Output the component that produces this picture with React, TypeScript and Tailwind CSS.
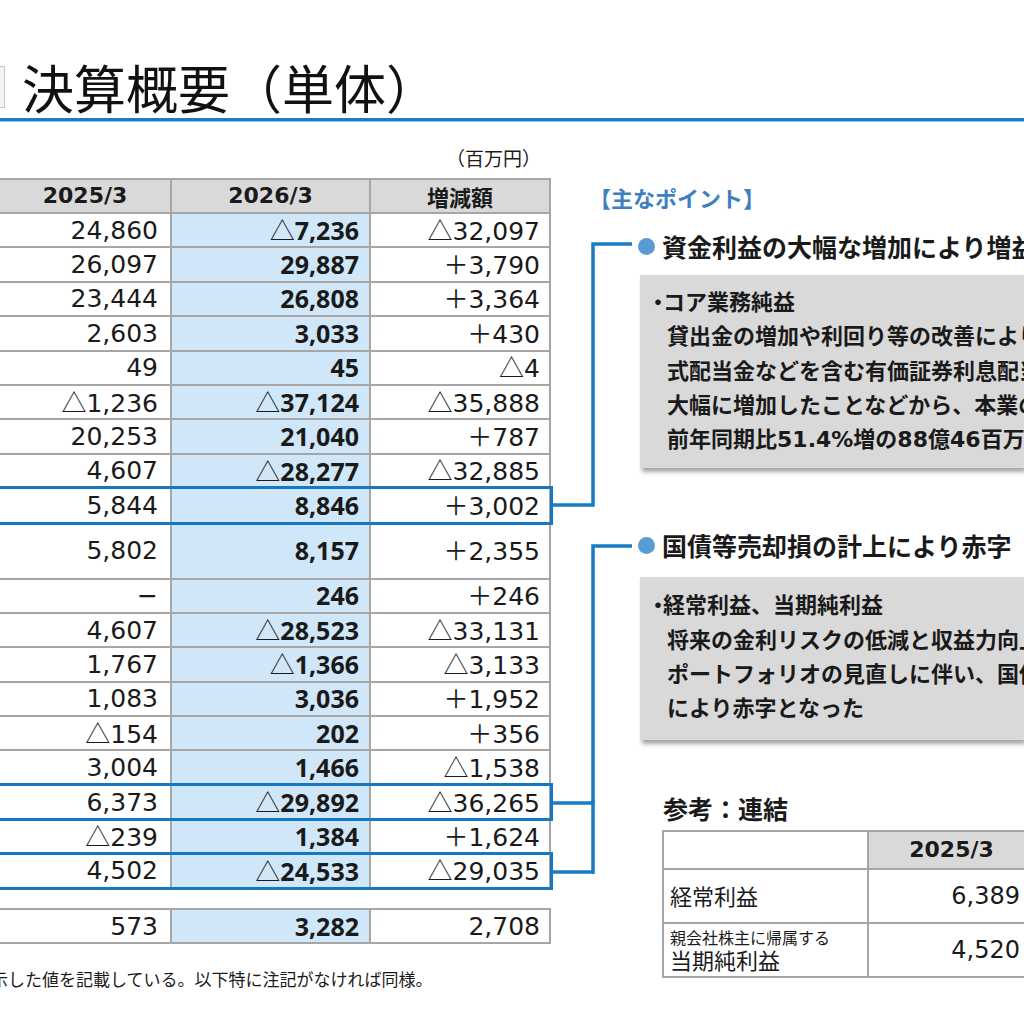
import clsx from "clsx";

type RowData = [string, string, string];

const rowsA: RowData[] = [
  ["24,860", "△7,236", "△32,097"],
  ["26,097", "29,887", "＋3,790"],
  ["23,444", "26,808", "＋3,364"],
  ["2,603", "3,033", "＋430"],
  ["49", "45", "△4"],
  ["△1,236", "△37,124", "△35,888"],
  ["20,253", "21,040", "＋787"],
  ["4,607", "△28,277", "△32,885"],
];

const rowsB: RowData[] = [
  ["−", "246", "＋246"],
  ["4,607", "△28,523", "△33,131"],
  ["1,767", "△1,366", "△3,133"],
  ["1,083", "3,036", "＋1,952"],
  ["△154", "202", "＋356"],
  ["3,004", "1,466", "△1,538"],
];

function Num({ v, bold }: { v: string; bold?: boolean }) {
  const p = v[0] === "△" || v[0] === "＋" ? v[0] : "";
  const rest = p ? v.slice(1) : v;
  return (
    <span
      className={clsx(
        "text-[25px] leading-none",
        bold ? "font-['Noto_Sans',sans-serif] font-bold" : "font-['DejaVu_Sans',sans-serif]"
      )}
    >
      {p && <span className="font-['Noto_Sans_CJK_JP',sans-serif] font-normal">{p}</span>}
      {rest}
    </span>
  );
}

function Row({ d, tall, hl }: { d: RowData; tall?: boolean; hl?: boolean }) {
  return (
    <div className={clsx("relative flex gap-[2px]", tall ? "h-[54px]" : "h-[32.4px]")}>
      <div className="w-[170px] bg-white flex items-center justify-end pr-[12px]">
        <Num v={d[0]} />
      </div>
      <div className="w-[197px] bg-[#cfe7f8] flex items-center justify-end pr-[10px]">
        <Num v={d[1]} bold />
      </div>
      <div className="flex-1 bg-white flex items-center justify-end pr-[9px]">
        <Num v={d[2]} />
      </div>
      {hl && (
        <span className="absolute -top-[3px] -bottom-[3px] -left-[6px] -right-[4px] border-[3px] border-[#1778c2] z-10" />
      )}
    </div>
  );
}

function MainTable() {
  return (
    <div className="w-[551px] bg-[#a6a6a6] flex flex-col gap-[2px] py-[2px] pr-[2px] text-[#1a1a1a]">
      <div className="flex gap-[2px] h-[32px] text-[22px] font-bold leading-none">
        <div className="w-[170px] bg-[#d9d9d9] flex items-center justify-center font-['DejaVu_Sans',sans-serif]">
          2025/3
        </div>
        <div className="w-[197px] bg-[#d9d9d9] flex items-center justify-center font-['DejaVu_Sans',sans-serif]">
          2026/3
        </div>
        <div className="flex-1 bg-[#d9d9d9] flex items-center justify-center font-['Noto_Sans_CJK_JP',sans-serif]">
          増減額
        </div>
      </div>
      {rowsA.map((r, i) => (
        <Row key={i} d={r} />
      ))}
      <Row d={["5,844", "8,846", "＋3,002"]} hl />
      <Row d={["5,802", "8,157", "＋2,355"]} tall />
      {rowsB.map((r, i) => (
        <Row key={i} d={r} />
      ))}
      <Row d={["6,373", "△29,892", "△36,265"]} hl />
      <Row d={["△239", "1,384", "＋1,624"]} />
      <Row d={["4,502", "△24,533", "△29,035"]} hl />
    </div>
  );
}

function Point({ title }: { title: string }) {
  return (
    <div className="flex items-center h-[32px] ml-[45px]">
      <span className="w-[17px] h-[17px] rounded-full bg-[#5b9bd5] shrink-0" />
      <span className="ml-[7px] text-[25px] font-bold whitespace-nowrap leading-none">{title}</span>
    </div>
  );
}

function GrayBox({
  lead,
  lines,
  className,
}: {
  lead: string;
  lines: React.ReactNode[];
  className?: string;
}) {
  return (
    <div
      className={clsx(
        "ml-[47px] bg-[#d9d9d9] shadow-[2px_4px_4px_rgba(0,0,0,0.35)] text-[22px] font-bold leading-[34.3px] whitespace-nowrap",
        className
      )}
    >
      <div className="pl-[7px] h-[34.3px]">
        <span className="inline-block w-[16px] text-center">・</span>
        {lead}
      </div>
      {lines.map((l, i) => (
        <div key={i} className="pl-[27px] h-[34.3px]">
          {l}
        </div>
      ))}
    </div>
  );
}

const dg = "font-['DejaVu_Sans',sans-serif]";

export default function App() {
  return (
    <div className="relative w-[1024px] h-[1024px] overflow-hidden bg-white text-[#1a1a1a] font-['Noto_Sans_CJK_JP',sans-serif]">
      {/* title */}
      <div className="flex items-center pt-[62px]">
        <div className="w-[40px] h-[42px] -ml-[35px] border border-[#c8c8c8] bg-[#f4f4f4] shrink-0" />
        <h1 className="ml-[17px] text-[52px] leading-[49px] font-normal text-[#111] whitespace-nowrap">
          決算概要（単体）
        </h1>
      </div>
      <div className="mt-[7px] h-[4px] bg-[#1b7cc6] border-b border-[#8fc3ea]" />

      <div className="flex">
        {/* left */}
        <div className="w-[551px] shrink-0">
          <div className="mt-[25px] pr-[10px] text-right text-[19px] leading-[22px]">（百万円）</div>
          <div className="mt-[9px]">
            <MainTable />
          </div>
          <div className="mt-[19px] w-[551px] bg-[#a6a6a6] py-[2px] pr-[2px] text-[#1a1a1a]">
            <div className="flex gap-[2px] h-[32.4px]">
              <div className="w-[170px] bg-white flex items-center justify-end pr-[12px]">
                <Num v="573" />
              </div>
              <div className="w-[197px] bg-[#cfe7f8] flex items-center justify-end pr-[10px]">
                <Num v="3,282" bold />
              </div>
              <div className="flex-1 bg-white flex items-center justify-end pr-[9px]">
                <Num v="2,708" />
              </div>
            </div>
          </div>
          <div className="mt-[25px] -ml-[9px] text-[17px] leading-[20px] whitespace-nowrap">
            示した値を記載している。以下特に注記がなければ同様。
          </div>
        </div>

        {/* right */}
        <div className="ml-[42px] flex-1 min-w-0">
          <div className="mt-[61px] h-[28px] -ml-[4px] text-[22px] leading-[28px] font-bold text-[#3d7fbf] whitespace-nowrap">
            【主なポイント】
          </div>
          <div className="mt-[19px]">
            <Point title="資金利益の大幅な増加により増益" />
          </div>
          <GrayBox
            className="mt-[13px] pt-[8px] pb-[14px]"
            lead="コア業務純益"
            lines={[
              "貸出金の増加や利回り等の改善により貸出金利息が増加したほか、株",
              "式配当金などを含む有価証券利息配当金が増加し、資金利益が",
              "大幅に増加したことなどから、本業の利益を示すコア業務純益は",
              <>
                前年同期比<span className={dg}>51.4%</span>増の<span className={dg}>88</span>億
                <span className={dg}>46</span>百万円となった
              </>,
            ]}
          />
          <div className="mt-[61px]">
            <Point title="国債等売却損の計上により赤字" />
          </div>
          <GrayBox
            className="mt-[16px] pt-[9px] pb-[16px]"
            lead="経常利益、当期純利益"
            lines={[
              "将来の金利リスクの低減と収益力向上に向けた有価証券",
              "ポートフォリオの見直しに伴い、国債等売却損を計上したこと",
              "により赤字となった",
            ]}
          />
          <div className="mt-[52px] ml-[70px] h-[32px] text-[25px] leading-[32px] font-bold whitespace-nowrap">
            参考：連結
          </div>
          <div className="mt-[6px] ml-[69px] w-[374px] bg-[#a6a6a6] p-[2px] flex flex-col gap-[2px]">
            <div className="flex gap-[2px] h-[36px]">
              <div className="w-[203px] bg-white" />
              <div className="flex-1 bg-[#d9d9d9] flex items-center justify-center text-[22px] font-bold font-['DejaVu_Sans',sans-serif] leading-none">
                2025/3
              </div>
            </div>
            <div className="flex gap-[2px] h-[52px]">
              <div className="w-[203px] bg-white flex items-center pl-[6px] text-[22px]">経常利益</div>
              <div className="flex-1 bg-white flex items-center justify-end pr-[14px]">
                <span className="text-[24px] font-['DejaVu_Sans',sans-serif] leading-none">6,389</span>
              </div>
            </div>
            <div className="flex gap-[2px] h-[52px]">
              <div className="w-[203px] bg-white flex flex-col justify-center pl-[6px]">
                <span className="text-[16px] leading-[18px] whitespace-nowrap">親会社株主に帰属する</span>
                <span className="text-[22px] leading-[26px]">当期純利益</span>
              </div>
              <div className="flex-1 bg-white flex items-center justify-end pr-[14px]">
                <span className="text-[24px] font-['DejaVu_Sans',sans-serif] leading-none">4,520</span>
              </div>
            </div>
          </div>
        </div>
      </div>

      {/* connectors */}
      <svg className="absolute left-0 top-0 pointer-events-none" width="1024" height="1024" viewBox="0 0 1024 1024">
        <g fill="none" stroke="#1a7cc4" strokeWidth="3.5">
          <path d="M553 505 H593 V244 H632" />
          <path d="M553 803 H593 V546 H632" />
          <path d="M553 872 H593" />
          <path d="M593 800 V874" />
        </g>
      </svg>
    </div>
  );
}
